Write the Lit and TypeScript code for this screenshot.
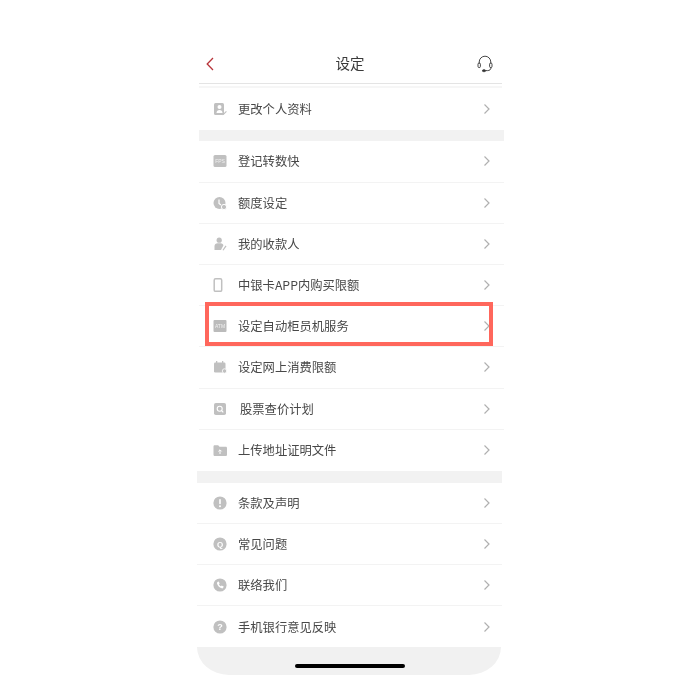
import { LitElement, html, css, svg } from "lit";
import { customElement } from "lit/decorators.js";

const G = "#c0c0c0";
const icons: Record<string, unknown> = {
  profile: svg`<rect x="1" y="1" width="10" height="12" rx="1.5" fill="${G}"/><circle cx="6.5" cy="5" r="2" fill="#fff"/><path d="M3.500 11c0-2 1.300-3 3-3s3 1 3 3z" fill="#fff"/><path d="M10 12l3-3 .8.8-3 3-1.200.4z" fill="${G}"/>`,
  fps: svg`<rect x="0.5" y="1" width="13" height="12" rx="1.500" fill="${G}"/><text x="7" y="9" font-size="5" text-anchor="middle" fill="#f0f0f0" font-family="Liberation Sans">FPS</text>`,
  limit: svg`<circle cx="6.500" cy="7" r="6" fill="${G}"/><path d="M6 3.500v4l2 1.500" stroke="#fff" stroke-width="1.200" fill="none"/><circle cx="11" cy="11" r="2.600" fill="${G}" stroke="#fff" stroke-width="1"/>`,
  payee: svg`<circle cx="6.200" cy="3.200" r="2.600" fill="${G}"/><path d="M1.500 13V9c0-1.600 1.400-2.800 3-2.800h3.200c1.500 0 2.600 1 2.600 2.200L8 13z" fill="${G}"/><path d="M9.500 13l3-4.500 1 .7-3 4.200z" fill="${G}"/>`,
  phone: svg`<rect x="1.200" y="0.800" width="7.500" height="12.500" rx="1.400" fill="none" stroke="${G}" stroke-width="1.500"/>`,
  atm: svg`<rect x="0.500" y="1" width="13" height="12" rx="1" fill="#bbb"/><text x="7" y="8.800" font-size="5" text-anchor="middle" fill="#f0f0f0" font-family="Liberation Sans">ATM</text>`,
  calendar: svg`<rect x="1" y="2.500" width="11.500" height="10" rx="1.200" fill="${G}"/><rect x="3" y="1" width="1.300" height="2.500" fill="${G}"/><rect x="9" y="1" width="1.300" height="2.500" fill="${G}"/><circle cx="11.500" cy="11" r="2.200" fill="${G}" stroke="#fff" stroke-width=".8"/>`,
  quote: svg`<rect x="1" y="1" width="12" height="12" rx="1.800" fill="${G}"/><circle cx="6.700" cy="6.700" r="2.500" fill="none" stroke="#fff" stroke-width="1.100"/><path d="M8.500 8.500l1.800 1.800" stroke="#fff" stroke-width="1.100"/>`,
  folder: svg`<path d="M0.500 3.500c0-.8.500-1.300 1.200-1.300h3.500l1.300 1.600h6.200c.7 0 1.300.5 1.300 1.200v6.700c0 .7-.6 1.300-1.300 1.300H1.800c-.7 0-1.300-.6-1.300-1.300z" fill="${G}"/><path d="M7 11V7M5.400 8.400 7 6.800l1.600 1.600" stroke="#fff" stroke-width="1" fill="none"/>`,
  notice: svg`<circle cx="7" cy="7" r="6.600" fill="${G}"/><rect x="6.200" y="3" width="1.600" height="5.200" rx=".8" fill="#fff"/><circle cx="7" cy="10.200" r="1" fill="#fff"/>`,
  faq: svg`<circle cx="7" cy="7" r="6.600" fill="${G}"/><text x="7" y="10" font-size="8" text-anchor="middle" fill="#fff" font-family="Liberation Sans" font-weight="700">Q</text>`,
  contact: svg`<circle cx="7" cy="7" r="6.600" fill="${G}"/><path d="M4.400 3.900l1.300-.5 1 2-.8.8c.4.9 1.100 1.600 2 2l.8-.8 2 1-.5 1.400c-.3.5-.9.7-1.600.5-2.300-.6-4-2.400-4.600-4.700-.1-.7.100-1.300.4-1.700z" fill="#fff"/>`,
  help: svg`<circle cx="7" cy="7" r="6.600" fill="${G}"/><text x="7" y="10.200" font-size="9" text-anchor="middle" fill="#fff" font-family="Liberation Sans" font-weight="700">?</text>`,
};

const groups: { icon: string; label: string; indent?: boolean }[][] = [
  [{ icon: "profile", label: "更改个人资料" }],
  [
    { icon: "fps", label: "登记转数快" },
    { icon: "limit", label: "额度设定" },
    { icon: "payee", label: "我的收款人" },
    { icon: "phone", label: "中银卡APP内购买限额" },
    { icon: "atm", label: "设定自动柜员机服务" },
    { icon: "calendar", label: "设定网上消费限额" },
    { icon: "quote", label: "股票查价计划", indent: true },
    { icon: "folder", label: "上传地址证明文件" },
  ],
  [
    { icon: "notice", label: "条款及声明" },
    { icon: "faq", label: "常见问题" },
    { icon: "contact", label: "联络我们" },
    { icon: "help", label: "手机银行意见反映" },
  ],
];

@customElement("app-root")
export class AppRoot extends LitElement {
  static styles = css`
    :host {
      display: block;
      width: 700px;
      height: 692px;
      background: #fff;
      font-family: "Noto Sans CJK SC", "Liberation Sans", sans-serif;
      color: #444;
      overflow: hidden;
    }
    .phone {
      position: relative;
      width: 307px;
      margin-left: 197px;
      padding-top: 45px;
    }
    .header {
      height: 38px;
      margin: 0 2px;
      border-bottom: 1px solid #e4e4e4;
      display: grid;
      grid-template-columns: 1fr auto 1fr;
      align-items: center;
      padding: 0 8px 0 7px;
      box-sizing: content-box;
    }
    .header svg:last-child {
      justify-self: end;
    }
    .title {
      font-size: 14.5px;
      color: #3a3a3a;
      line-height: 20px;
      filter: blur(0.3px);
      position: relative;
      top: -1px;
    }
    .sliver {
      height: 2px;
      margin: 2.4px 2px 0;
      background: #f6f6f6;
    }
    .group {
      margin-left: 2px;
    }
    .group.last {
      margin-left: 0;
      margin-right: 2px;
    }
    .row {
      height: 41.2px;
      box-sizing: border-box;
      display: flex;
      align-items: center;
      padding: 0 13px 0 14px;
      border-bottom: 1px solid #f3f3f3;
    }
    .row:last-child {
      border-bottom: none;
    }
    .group.last .row {
      height: 41.1px;
      padding-left: 16px;
      padding-right: 11px;
    }
    .icon {
      width: 14px;
      height: 14px;
      flex: none;
      filter: blur(0.3px);
    }
    .label {
      flex: 1;
      margin-left: 11px;
      font-size: 12.3px;
      line-height: 16px;
      white-space: nowrap;
      color: #484848;
      filter: blur(0.3px);
    }
    .label.indent {
      margin-left: 13px;
    }
    .chev {
      width: 8px;
      height: 12px;
      flex: none;
    }
    .band {
      height: 11.8px;
      margin-left: 2px;
      background: #f2f2f2;
    }
    .band.last {
      margin-left: 0;
      margin-right: 2px;
    }
    .footer {
      height: 28px;
      margin-right: 3px;
      background: #f1f1f1;
      border-radius: 0 0 32px 32px / 0 0 28px 28px;
      display: flex;
      justify-content: center;
      padding-top: 17px;
      box-sizing: border-box;
    }
    .bar {
      width: 110px;
      height: 4px;
      border-radius: 2px;
      background: #000;
      margin-left: 2px;
    }
    .highlight {
      position: absolute;
      left: 8px;
      top: 302px;
      width: 288px;
      height: 44px;
      box-sizing: border-box;
      border: 4px solid #ff675c;
    }
  `;

  private chevron(color = "#b0b0b0") {
    return html`<svg class="chev" viewBox="0 0 8 12"><path d="M1.500 1.500 6 6l-4.500 4.500" fill="none" stroke=${color} stroke-width="1.200"/></svg>`;
  }

  render() {
    const sections = groups.map(
      (g, i) => html`
        ${i === 0 ? "" : html`<div class="band ${i === 2 ? "last" : ""}"></div>`}
        <div class="group ${i === 2 ? "last" : ""}">
          ${g.map(
            (r) => html`<div class="row">
              <svg class="icon" viewBox="0 0 14 14">${icons[r.icon]}</svg>
              <span class="label ${r.indent ? "indent" : ""}">${r.label}</span>
              ${this.chevron()}
            </div>`
          )}
        </div>
      `
    );
    return html`
      <div class="phone">
        <div class="header">
          <svg width="8" height="14" viewBox="0 0 8 14"><path d="M7 1 1.200 7 7 13" fill="none" stroke="#b8343a" stroke-width="1.300"/></svg>
          <span class="title">设定</span>
          <svg width="18" height="18" viewBox="0 0 18 18" fill="none" stroke="#333" stroke-width="0.900">
            <path d="M3.200 8.500V7a5.800 5.800 0 0 1 11.600 0v1.500"/>
            <rect x="2" y="8" width="2.400" height="4.600" rx="1.200"/>
            <rect x="13.600" y="8" width="2.400" height="4.600" rx="1.200"/>
            <path d="M15 12.600c0 2-1.500 3-3.500 3H9.500"/>
            <rect x="6.500" y="14.800" width="3" height="1.800" rx=".9" fill="#333"/>
          </svg>
        </div>
        <div class="sliver"></div>
        ${sections}
        <div class="footer"><div class="bar"></div></div>
        <div class="highlight"></div>
      </div>
    `;
  }
}
